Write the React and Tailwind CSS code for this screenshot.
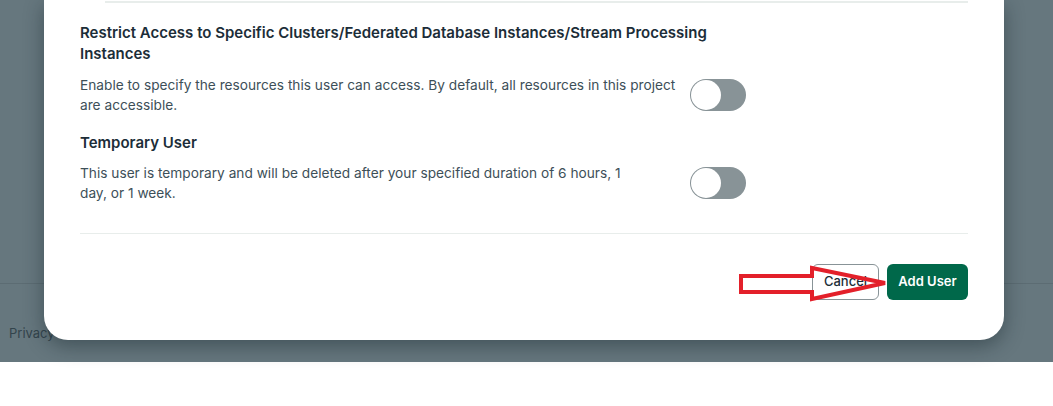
export default function App() {
  const font = { fontFamily: 'Inter, "Noto Sans", sans-serif' };
  return (
    <div className="w-[1053px] h-[406px] bg-white overflow-hidden" style={font}>
      <div className="relative h-[362px] bg-[#66777e]">
        <div className="h-[284px] border-b border-[#5c6c73]" />
        <div className="pl-[9px] pt-[40px] text-[13px] leading-[18px] text-[#33444c]">Privacy</div>

        <div className="absolute left-[44px] top-0 w-[960px] h-[340px] bg-white rounded-b-[24px] shadow-[0_6px_20px_rgba(20,35,42,0.45)] px-[36px]">
          <div className="pt-px">
            <div className="ml-[25px] h-[2px] bg-[#e8edeb]" />
          </div>

          <div className="mt-[19px] w-[666px] text-[15px] leading-[21px] font-semibold text-[#1c2d38]">
            Restrict Access to Specific Clusters/Federated Database Instances/Stream Processing
            <br />
            Instances
          </div>
          <div className="mt-[11px] flex items-center gap-[10px]">
            <div className="w-[600px] whitespace-nowrap text-[13.7px] leading-[20px] text-[#3d4f58]">
              Enable to specify the resources this user can access. By default, all resources in this project
              <br />
              are accessible.
            </div>
            <div className="w-[56px] h-[32px] rounded-full bg-[#889397] p-px flex items-center">
              <div className="w-[30px] h-[30px] rounded-full bg-white" />
            </div>
          </div>

          <div className="mt-[18px] text-[15px] leading-[20px] font-semibold text-[#1c2d38]">Temporary User</div>
          <div className="mt-[10px] flex items-center gap-[10px]">
            <div className="w-[600px] whitespace-nowrap text-[13.7px] leading-[20px] text-[#3d4f58]">
              This user is temporary and will be deleted after your specified duration of 6 hours, 1
              <br />
              day, or 1 week.
            </div>
            <div className="w-[56px] h-[32px] rounded-full bg-[#889397] p-px flex items-center">
              <div className="w-[30px] h-[30px] rounded-full bg-white" />
            </div>
          </div>

          <div className="mt-[30px] h-px bg-[#e8edeb]" />

          <div className="relative mt-[30px] flex justify-end gap-[8px]">
            <button className="w-[67px] h-[36px] rounded-[6px] border border-[#889397] bg-white text-[13px] font-medium text-[#1c2d38]">
              Cancel
            </button>
            <button className="w-[81px] h-[36px] rounded-[6px] bg-[#00684a] text-[13px] font-semibold text-white">
              Add User
            </button>
            <svg
              className="absolute left-[656px] top-[-2px]"
              width="156"
              height="44"
              viewBox="0 0 156 44"
              fill="none"
            >
              <polygon
                points="5,14 76,14 76,6 149,21 76,37 76,30 5,30"
                stroke="#e3202a"
                strokeWidth="4"
                strokeLinejoin="miter"
              />
            </svg>
          </div>
        </div>
      </div>
    </div>
  );
}
